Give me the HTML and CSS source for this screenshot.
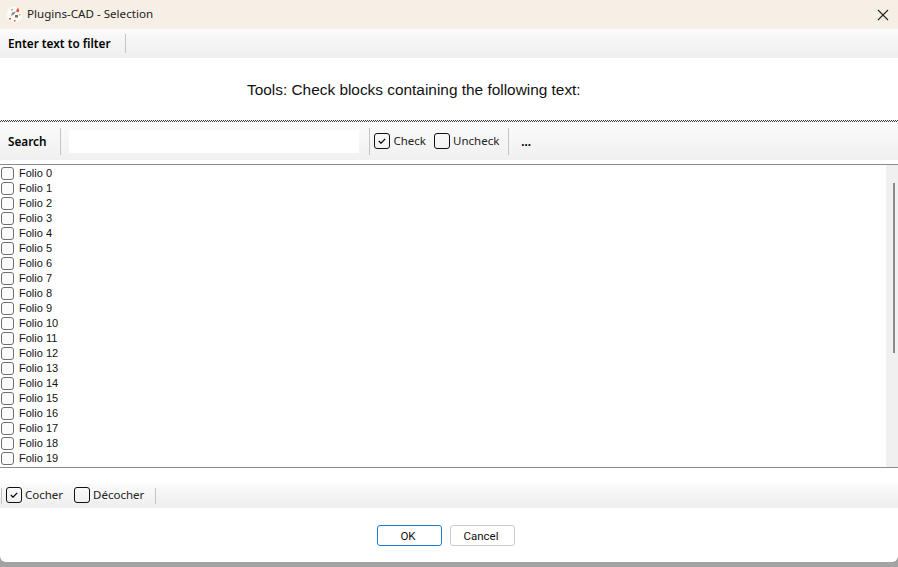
FILE: index.html
```html
<!DOCTYPE html>
<html lang="en">
<head>
<meta charset="utf-8">
<title>Plugins-CAD - Selection</title>
<link rel="stylesheet" href="styles.css">
</head>
<body>
<div class="window">
  <header class="titlebar">
    <svg class="appicon" width="17" height="17" viewBox="0 0 17 17">
      <circle cx="8.500" cy="8.500" r="8" fill="#fdfbf8"/>
      <path d="M10 5l2-3.500 1.500 3.500-2 1.500z" fill="#e2552b"/>
      <path d="M5 10l1-3.500 4-1-2 3z" fill="#8a8f94"/>
      <path d="M9 9h3v2.500H9z" fill="#6b7075"/>
      <rect x="5" y="3" width="2" height="1.500" fill="#e8a080"/>
      <rect x="3" y="12" width="2" height="1.500" fill="#e2552b"/>
      <rect x="8" y="14" width="1.500" height="1.500" fill="#e2552b"/>
      <rect x="13" y="8" width="1.500" height="1.500" fill="#e8a080"/>
    </svg>
    <span class="title">Plugins-CAD - Selection</span>
    <svg class="close" width="12" height="12" viewBox="0 0 12 12"><path d="M1 1l10 10M11 1L1 11" stroke="#222" stroke-width="1.100" fill="none"/></svg>
  </header>

  <div class="bar bar-filter">
    <strong class="bar-label">Enter text to filter</strong>
    <span class="sep sep-filter"></span>
  </div>

  <div class="heading">Tools: Check blocks containing the following text:</div>
  <div class="rule"></div>

  <div class="bar bar-search">
    <strong class="bar-label">Search</strong>
    <span class="sep sep-search"></span>
    <input class="search" type="text" aria-label="Search">
    <span class="sep sep-a"></span>
    <span class="tool tool-check">
      <span class="box"><svg width="8" height="6" viewBox="0 0 8 6"><path d="M.8 3l2.200 2.200L7.200.8" stroke="#000" stroke-width="1.200" fill="none"/></svg></span>Check
    </span>
    <span class="tool tool-uncheck"><span class="box"></span>Uncheck</span>
    <span class="sep sep-b"></span>
    <strong class="more">...</strong>
  </div>

  <main class="listwrap">
    <ul class="list">
      <li class="row"><span class="cb"></span>Folio 0</li>
      <li class="row"><span class="cb"></span>Folio 1</li>
      <li class="row"><span class="cb"></span>Folio 2</li>
      <li class="row"><span class="cb"></span>Folio 3</li>
      <li class="row"><span class="cb"></span>Folio 4</li>
      <li class="row"><span class="cb"></span>Folio 5</li>
      <li class="row"><span class="cb"></span>Folio 6</li>
      <li class="row"><span class="cb"></span>Folio 7</li>
      <li class="row"><span class="cb"></span>Folio 8</li>
      <li class="row"><span class="cb"></span>Folio 9</li>
      <li class="row"><span class="cb"></span>Folio 10</li>
      <li class="row"><span class="cb"></span>Folio 11</li>
      <li class="row"><span class="cb"></span>Folio 12</li>
      <li class="row"><span class="cb"></span>Folio 13</li>
      <li class="row"><span class="cb"></span>Folio 14</li>
      <li class="row"><span class="cb"></span>Folio 15</li>
      <li class="row"><span class="cb"></span>Folio 16</li>
      <li class="row"><span class="cb"></span>Folio 17</li>
      <li class="row"><span class="cb"></span>Folio 18</li>
      <li class="row"><span class="cb"></span>Folio 19</li>
    </ul>
    <div class="scrollbar"><div class="thumb"></div></div>
  </main>

  <div class="bar bar-bottom">
    <span class="sep sep-c"></span>
    <span class="tool tool-cocher">
      <span class="box"><svg width="8" height="6" viewBox="0 0 8 6"><path d="M.8 3l2.200 2.200L7.200.8" stroke="#000" stroke-width="1.200" fill="none"/></svg></span>Cocher
    </span>
    <span class="tool tool-decocher"><span class="box"></span>Décocher</span>
    <span class="sep sep-d"></span>
  </div>

  <footer class="footer">
    <button class="btn btn-ok" type="button">OK</button>
    <button class="btn" type="button">Cancel</button>
  </footer>
</div>
</body>
</html>
```
FILE: styles.css
```css
* { box-sizing: border-box; }
html, body { margin: 0; padding: 0; }
body {
  width: 898px;
  height: 567px;
  overflow: hidden;
  background: #a3a3a3;
  font-family: "Noto Sans", "Open Sans", sans-serif;
  font-size: 11.5px;
  color: #111;
}
.window {
  height: 562px;
  background: #fff;
  border-radius: 0 0 6px 6px;
  overflow: hidden;
  display: flex;
  flex-direction: column;
}
.titlebar {
  height: 29px;
  flex: none;
  background: #f6efe6;
  display: flex;
  align-items: center;
  padding: 0 9px 0 6px;
}
.appicon { flex: none; }
.title { margin-left: 4px; padding-bottom: 2px; font-size: 11.6px; color: #222; flex: 1; }
.close { flex: none; }

.bar {
  display: flex;
  align-items: center;
  background: linear-gradient(#fbfbfb, #eeeeee);
  flex: none;
}
.bar-label { padding-bottom: 2px; font-size: 11.75px; font-weight: 600; color: #000; margin-left: 8px; }
.sep { width: 1px; height: 19px; background: #c4c4c4; flex: none; }
.bar-filter { height: 29px; }
.sep-filter { margin-left: 14px; }

.heading {
  flex: none;
  height: 62px;
  padding: 23px 0 0 247px;
  font-family: "Liberation Sans", Arial, sans-serif;
  font-size: 15.4px;
  line-height: 18px;
  color: #111;
  white-space: nowrap;
}
.rule {
  flex: none;
  height: 2px;
  background: conic-gradient(#333 25%, #fff 0 50%, #333 0 75%, #fff 0) 0 0 / 2px 2px;
}
.bar-search { height: 38px; margin-bottom: 4px; background: linear-gradient(#fbfbfb, #f0f0f0); padding-top: 1px; }
.sep-search, .sep-a, .sep-b { height: 27px; }
.sep-search { margin-left: 14px; }
.search {
  width: 290px;
  height: 23px;
  margin-left: 8px;
  border: 0;
  background: #fff;
  outline: 0;
}
.sep-a { margin-left: 10px; }
.tool { display: flex; align-items: center; padding-bottom: 2px; color: #222; white-space: nowrap; }
.box {
  width: 16px;
  height: 16px;
  border: 1px solid #111;
  border-radius: 3px;
  margin-right: 3px;
  display: flex;
  align-items: center;
  justify-content: center;
  flex: none;
}
.tool-check { margin-left: 4px; }
.tool-uncheck { margin-left: 8px; }
.sep-b { margin-left: 9px; }
.more { margin-left: 12px; font-weight: 700; color: #000; }

.listwrap {
  height: 304px;
  flex: none;
  border-top: 1px solid #8a8a8a;
  border-bottom: 1px solid #8a8a8a;
  display: flex;
  overflow: hidden;
}
.list { list-style: none; margin: 0; padding: 1px 0 0 1px; flex: 1; }
.row {
  height: 15px;
  display: flex;
  align-items: flex-start;
  white-space: nowrap;
  color: #111;
  font-family: "Liberation Sans", Arial, sans-serif;
  font-size: 11px;
  line-height: 14px;
}
.cb {
  width: 13px;
  height: 13px;
  margin-top: 1px;
  border: 1px solid #6f6f6f;
  border-radius: 3px;
  background: #fbfbfb;
  margin-right: 5px;
  flex: none;
}
.scrollbar {
  width: 12px;
  flex: none;
  background: #f0f0f0;
  padding: 18px 0 0 7px;
}
.thumb { width: 2px; height: 170px; background: #8a8a8a; }

.bar-bottom { height: 25px; margin-top: 15px; }
.sep-c { margin-left: 1px; height: 16px; }
.tool-cocher { margin-left: 4px; }
.tool-decocher { margin-left: 11px; }
.sep-d { margin-left: 11px; height: 16px; }

.footer {
  flex: 1;
  display: flex;
  justify-content: center;
  align-items: flex-start;
  gap: 8px;
  padding: 17px 6px 0 0;
}
.btn {
  width: 65px;
  height: 21px;
  padding: 0 3px 0 0;
  font-family: Roboto, sans-serif;
  font-size: 11.5px;
  color: #111;
  background: #fff;
  border: 1px solid #cbcbcb;
  border-radius: 3px;
}
.btn-ok { border-color: #1a7fd0; }
```
